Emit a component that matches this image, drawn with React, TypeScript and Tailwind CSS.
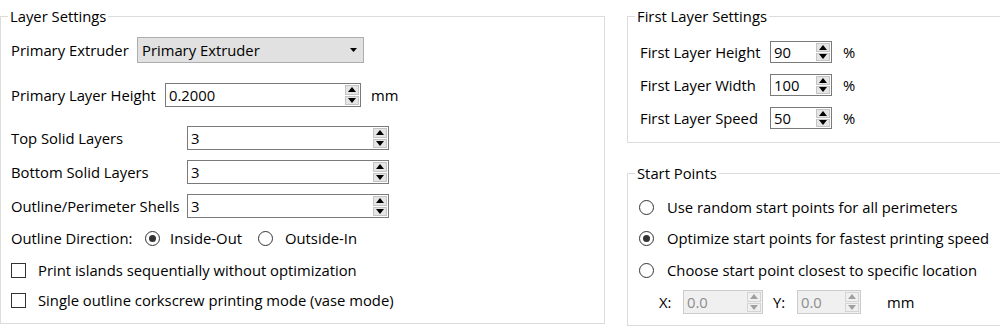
import React from "react";

const font = { fontFamily: '"Open Sans", "Noto Sans", sans-serif' };

function Arrows({ disabled }: { disabled?: boolean }) {
  const c = disabled ? "#a0a0a0" : "#000000";
  const bg = disabled ? "bg-[#f0f0f0] border-[#d4d4d4]" : "bg-[#e5e5e5] border-[#c4c4c4]";
  return (
    <div className="flex flex-col w-[14px] my-[1px] mr-[1px] gap-[1px]">
      <div className={`flex-1 flex items-center justify-center border ${bg}`}>
        <svg width="8" height="5" viewBox="0 0 8 5">
          <polygon points="0,5 8,5 4,0" fill={c} />
        </svg>
      </div>
      <div className={`flex-1 flex items-center justify-center border ${bg}`}>
        <svg width="8" height="5" viewBox="0 0 8 5">
          <polygon points="0,0 8,0 4,5" fill={c} />
        </svg>
      </div>
    </div>
  );
}

function Spin({ value, className, disabled }: { value: string; className: string; disabled?: boolean }) {
  return (
    <div
      className={`flex items-stretch border ${
        disabled ? "border-[#cccccc] bg-[#f0f0f0] text-[#8d8d8d]" : "border-[#7a7a7a] bg-white text-black"
      } ${className}`}
    >
      <div className="flex-1 flex items-center pl-[3px] leading-none">{value}</div>
      <Arrows disabled={disabled} />
    </div>
  );
}

function Radio({ checked }: { checked?: boolean }) {
  return (
    <div className="w-[15px] h-[15px] rounded-full border border-[#333333] bg-white flex items-center justify-center shrink-0">
      {checked && <div className="w-[7px] h-[7px] rounded-full bg-[#333333]" />}
    </div>
  );
}

function Check() {
  return <div className="w-[15px] h-[15px] border border-[#333333] bg-white shrink-0" />;
}

export default function App() {
  return (
    <div className="w-[1000px] h-[328px] overflow-hidden bg-white text-[14.8px] text-black flex" style={font}>
      <fieldset className="border border-[#dcdcdc] w-[605px] h-[318px] mt-[6px] shrink-0 px-[10px] m-0 p-0 min-w-0">
        <legend className="ml-[-3px] px-[2px] leading-[20px]">Layer Settings</legend>
        <div className="flex items-center h-[26px] mt-[11px]">
          <span className="w-[126px] whitespace-nowrap">Primary Extruder</span>
          <div className="w-[227px] h-[26px] bg-[#e1e1e1] border border-[#adadad] flex items-center pl-[4px] pr-[6px]">
            <span className="flex-1">Primary Extruder</span>
            <svg width="7" height="4" viewBox="0 0 7 4">
              <polygon points="0,0 7,0 3.5,4" fill="#000" />
            </svg>
          </div>
        </div>
        <div className="flex items-center h-[24px] mt-[20px]">
          <span className="w-[154px] whitespace-nowrap">Primary Layer Height</span>
          <Spin value="0.2000" className="w-[196px] h-[24px]" />
          <span className="ml-[10px]">mm</span>
        </div>
        <div className="grid grid-cols-[176px_202px] items-center mt-[19px] h-[24px]">
          <span className="whitespace-nowrap">Top Solid Layers</span>
          <Spin value="3" className="h-[24px]" />
        </div>
        <div className="grid grid-cols-[176px_202px] items-center mt-[10px] h-[24px]">
          <span className="whitespace-nowrap">Bottom Solid Layers</span>
          <Spin value="3" className="h-[24px]" />
        </div>
        <div className="grid grid-cols-[176px_202px] items-center mt-[10px] h-[24px]">
          <span className="whitespace-nowrap">Outline/Perimeter Shells</span>
          <Spin value="3" className="h-[24px]" />
        </div>
        <div className="flex items-center h-[20px] mt-[10px]">
          <span className="w-[134px] whitespace-nowrap">Outline Direction:</span>
          <Radio checked />
          <span className="ml-[10px] w-[88px] whitespace-nowrap">Inside-Out</span>
          <Radio />
          <span className="ml-[12px] whitespace-nowrap">Outside-In</span>
        </div>
        <div className="flex items-center h-[20px] mt-[12px]">
          <Check />
          <span className="ml-[12px] whitespace-nowrap">Print islands sequentially without optimization</span>
        </div>
        <div className="flex items-center h-[20px] mt-[10px]">
          <Check />
          <span className="ml-[12px] whitespace-nowrap">Single outline corkscrew printing mode (vase mode)</span>
        </div>
      </fieldset>

      <div className="flex flex-col ml-[22px] shrink-0">
        <fieldset className="border border-[#dcdcdc] w-[400px] h-[137px] mt-[6px] m-0 p-0 px-[12px] min-w-0">
          <legend className="ml-[-5px] px-[2px] leading-[20px]">First Layer Settings</legend>
          <div className="grid grid-cols-[130px_62px_auto] items-center h-[22px] mt-[15px]">
            <span className="whitespace-nowrap">First Layer Height</span>
            <Spin value="90" className="h-[22px]" />
            <span className="ml-[11px]">%</span>
          </div>
          <div className="grid grid-cols-[130px_62px_auto] items-center h-[22px] mt-[11px]">
            <span className="whitespace-nowrap">First Layer Width</span>
            <Spin value="100" className="h-[22px]" />
            <span className="ml-[11px]">%</span>
          </div>
          <div className="grid grid-cols-[130px_62px_auto] items-center h-[22px] mt-[11px]">
            <span className="whitespace-nowrap">First Layer Speed</span>
            <Spin value="50" className="h-[22px]" />
            <span className="ml-[11px]">%</span>
          </div>
        </fieldset>

        <fieldset className="border border-[#dcdcdc] w-[400px] h-[163px] mt-[20px] m-0 p-0 px-[11px] min-w-0">
          <legend className="ml-[-4px] px-[2px] leading-[20px]">Start Points</legend>
          <div className="flex items-center h-[20px] mt-[14px]">
            <Radio />
            <span className="ml-[13px] whitespace-nowrap">Use random start points for all perimeters</span>
          </div>
          <div className="flex items-center h-[20px] mt-[11px]">
            <Radio checked />
            <span className="ml-[13px] whitespace-nowrap">Optimize start points for fastest printing speed</span>
          </div>
          <div className="flex items-center h-[20px] mt-[12px]">
            <Radio />
            <span className="ml-[13px] whitespace-nowrap">Choose start point closest to specific location</span>
          </div>
          <div className="flex items-center h-[24px] mt-[10px] pl-[20px]">
            <span className="w-[24px]">X:</span>
            <Spin value="0.0" disabled className="w-[80px] h-[24px]" />
            <span className="ml-[10px] w-[24px]">Y:</span>
            <Spin value="0.0" disabled className="w-[64px] h-[24px]" />
            <span className="ml-[26px]">mm</span>
          </div>
        </fieldset>
      </div>
    </div>
  );
}
